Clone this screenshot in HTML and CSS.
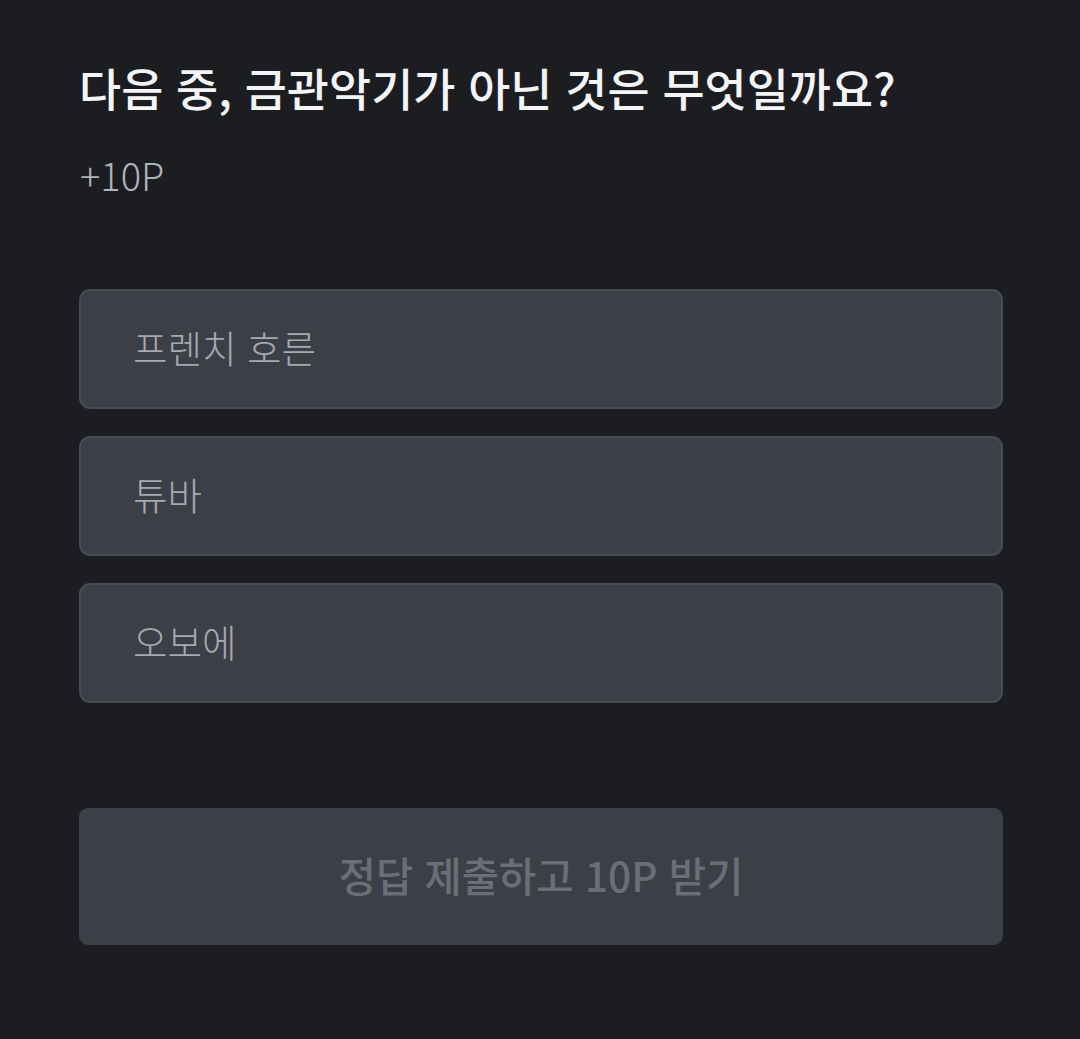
FILE: index.html
```html
<!DOCTYPE html>
<html lang="ko">
<head>
<meta charset="UTF-8" />
<title>퀴즈</title>
<link rel="stylesheet" href="styles.css">
</head>
<body>

<div class="quiz">
  <h1 class="question">다음 중, 금관악기가 아닌 것은 무엇일까요?</h1>
  <p class="reward">+10P</p>

  <div class="options">
    <button class="option">프렌치 호른</button>
    <button class="option">튜바</button>
    <button class="option">오보에</button>
  </div>

  <button class="submit" disabled>정답 제출하고 10P 받기</button>
</div>

</body>
</html>
```

FILE: styles.css
```css
html, body { margin: 0; background: #1c1d21; }
body { font-family: "Noto Sans CJK KR", "Noto Sans", sans-serif; }
.quiz { padding: 51px 77px 0 79px; }
.question { margin: 0; font-size: 45.8px; line-height: 72px; font-weight: 500; color: #f2f4f6; letter-spacing: 0; }
.reward { margin: 26px 0 0 1px; font-size: 38px; line-height: 52px; font-weight: 300; color: #b0b3ba; }
.options { margin-top: 88px; display: flex; flex-direction: column; gap: 27px; }
.option { height: 120px; padding: 0 0 6px 52px; text-align: left; font-family: inherit; font-size: 37.5px; font-weight: 300; color: #a6a9b1; background: #3d3f47; border: 2px solid #494b53; border-radius: 11px; }
.submit { margin-top: 105px; width: 100%; height: 137px; padding-bottom: 5px; font-family: inherit; font-size: 40.5px; font-weight: 500; color: #6b6e77; background: #3d3f47; border: none; border-radius: 9px; }
```
